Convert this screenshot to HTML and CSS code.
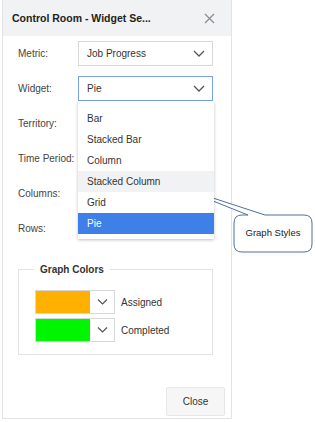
FILE: index.html
```html
<!DOCTYPE html>
<html lang="en">
<head>
    <meta charset="UTF-8">
    <title>Control Room - Widget Settings</title>
    <link rel="stylesheet" href="styles.css">
</head>
<body>
    <div class="dialog">
        <div class="dialog-header">
            <span class="dialog-title">Control Room - Widget Se...</span>
            <span class="dialog-close">
                <svg width="11" height="11" viewBox="0 0 11 11"><path d="M1 1L10 10M10 1L1 10" stroke="#8a8f96" stroke-width="1.3"/></svg>
            </span>
        </div>

        <div class="dialog-body">
            <div class="form-rows">
                <div class="form-row">
                    <label>Metric:</label>
                    <div class="select">
                        <span>Job Progress</span>
                        <svg class="chev" width="12" height="7" viewBox="0 0 12 7"><path d="M1 1L6 6L11 1" fill="none" stroke="#555" stroke-width="1.3"/></svg>
                    </div>
                </div>
                <div class="form-row">
                    <label>Widget:</label>
                    <div class="select select-open">
                        <span>Pie</span>
                        <svg class="chev" width="12" height="7" viewBox="0 0 12 7"><path d="M1 1L6 6L11 1" fill="none" stroke="#555" stroke-width="1.3"/></svg>
                    </div>
                    <ul class="dropdown">
                        <li>Bar</li>
                        <li>Stacked Bar</li>
                        <li>Column</li>
                        <li class="hover">Stacked Column</li>
                        <li>Grid</li>
                        <li class="selected">Pie</li>
                    </ul>
                </div>
                <div class="form-row"><label>Territory:</label></div>
                <div class="form-row"><label>Time Period:</label></div>
                <div class="form-row"><label>Columns:</label></div>
                <div class="form-row"><label>Rows:</label></div>
            </div>

            <fieldset class="colors">
                <legend>Graph Colors</legend>
                <div class="color-row">
                    <div class="color-pick">
                        <span class="swatch orange"></span>
                        <span class="pick-btn">
                            <svg width="11" height="6" viewBox="0 0 11 6"><path d="M1 0.5L5.5 5L10 0.5" fill="none" stroke="#555" stroke-width="1.2"/></svg>
                        </span>
                    </div>
                    <span>Assigned</span>
                </div>
                <div class="color-row">
                    <div class="color-pick">
                        <span class="swatch green"></span>
                        <span class="pick-btn">
                            <svg width="11" height="6" viewBox="0 0 11 6"><path d="M1 0.5L5.5 5L10 0.5" fill="none" stroke="#555" stroke-width="1.2"/></svg>
                        </span>
                    </div>
                    <span>Completed</span>
                </div>
            </fieldset>

            <div class="dialog-footer">
                <button class="btn">Close</button>
            </div>
        </div>
    </div>

    <!-- annotation callout -->
    <div class="callout">
        <svg width="145" height="75" viewBox="170 180 145 75">
            <path d="M265 215 L304 215 Q312 215 312 223 L312 244 Q312 252 304 252 L242 252 Q234 252 234 244 L234 223 Q234 215 242 215 L248 215 L173 185 Z"
                  fill="#fff" stroke="#4f6f9f" stroke-width="1"/>
        </svg>
        <span class="callout-text">Graph Styles</span>
    </div>
</body>
</html>
```

FILE: styles.css
```css
body {
    margin: 0;
    font-family: "Liberation Sans", Arial, sans-serif;
    font-size: 10px;
    color: #333;
    background: #fff;
}
.dialog {
    position: relative;
    margin-left: 2px;
    width: 230px;
    height: 419px;
    border: 1px solid #e2e3e5;
    border-top: none;
    box-sizing: border-box;
    display: flex;
    flex-direction: column;
}
.dialog-header {
    height: 36px;
    background: #f1f2f3;
    display: flex;
    align-items: center;
    justify-content: space-between;
    padding: 0 16px 0 9px;
    flex-shrink: 0;
}
.dialog-title {
    font-size: 10.5px;
    font-weight: bold;
    color: #222;
}
.dialog-close {
    display: flex;
}
.dialog-body {
    flex: 1;
    display: flex;
    flex-direction: column;
    padding: 5px 0 0 15px;
}
.form-rows {
    display: flex;
    flex-direction: column;
    gap: 10px;
}
.form-row {
    position: relative;
    display: flex;
    align-items: center;
    height: 25px;
}
.form-row label {
    width: 60px;
    white-space: nowrap;
    color: #444;
}
.select {
    width: 135px;
    height: 25px;
    box-sizing: border-box;
    border: 1px solid #d6d8db;
    display: flex;
    align-items: center;
    justify-content: space-between;
    padding: 0 7px 0 8px;
    color: #333;
}
.select-open {
    border-color: #7aa2ea;
}
.dropdown {
    position: absolute;
    left: 60px;
    top: 25px;
    width: 136px;
    margin: 0;
    padding: 7px 0 5px;
    list-style: none;
    background: #fff;
    box-shadow: 0 1px 3px rgba(0,0,0,0.25);
    z-index: 2;
}
.dropdown li {
    height: 21px;
    line-height: 21px;
    padding-left: 9px;
    color: #333;
}
.dropdown li.hover {
    background: #f1f2f4;
}
.dropdown li.selected {
    background: #3f7fe8;
    color: #fff;
}
.colors {
    margin: 23px 0 0 0;
    width: 195px;
    height: 91px;
    box-sizing: border-box;
    border: 1px solid #e2e3e5;
    padding: 15px 0 0 16px;
    display: flex;
    flex-direction: column;
    gap: 4px;
}
.colors legend {
    margin-left: -1px;
    padding: 0 6px;
    font-weight: bold;
    color: #333;
}
.color-row {
    display: flex;
    align-items: center;
    gap: 6px;
    color: #333;
}
.color-pick {
    display: flex;
    width: 80px;
    height: 24px;
    border: 1px solid #d6d8db;
    box-sizing: border-box;
}
.swatch {
    width: 54px;
    height: 100%;
}
.orange {
    background: #ffb000;
}
.green {
    background: #00f500;
}
.pick-btn {
    flex: 1;
    display: flex;
    align-items: center;
    justify-content: center;
    background: #fff;
}
.dialog-footer {
    flex: 1;
    display: flex;
    justify-content: flex-end;
    align-items: flex-end;
    padding: 0 6px 2px 0;
}
.btn {
    width: 59px;
    height: 29px;
    border: 1px solid #e6e7e9;
    border-radius: 2px;
    background: #f6f6f7;
    font-family: "Liberation Sans", Arial, sans-serif;
    font-size: 10px;
    color: #333;
}
.callout {
    position: absolute;
    left: 170px;
    top: 180px;
    width: 145px;
    height: 75px;
}
.callout svg {
    display: block;
}
.callout-text {
    position: absolute;
    display: block;
    left: 64px;
    top: 47px;
    width: 78px;
    text-align: center;
    font-size: 9.5px;
    color: #222;
}
```
